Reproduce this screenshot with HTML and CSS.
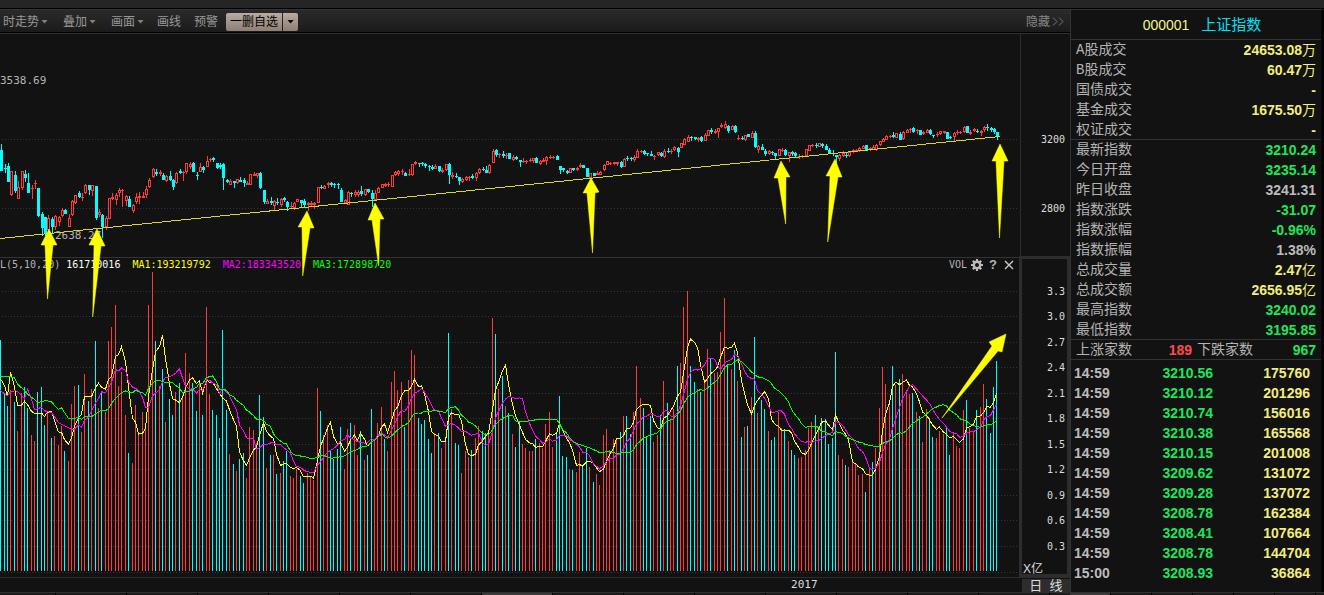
FILE: index.html
```html
<!DOCTYPE html>
<html lang="zh-CN">
<head>
<meta charset="utf-8">
<title>上证指数 000001</title>
<link rel="stylesheet" href="styles.css">
</head>
<body>
<div class="ribbon"></div>
<main class="workspace">
  <section class="chart-side">
    <nav class="toolbar">
      <button class="tool menu">时走势<i class="caret"></i></button>
      <button class="tool menu">叠加<i class="caret"></i></button>
      <button class="tool menu">画面<i class="caret"></i></button>
      <button class="tool">画线</button>
      <button class="tool">预警</button>
      <div class="split">
        <button class="split-main">一删自选</button>
        <button class="split-more" aria-label="更多"><i class="caret dark"></i></button>
      </div>
      <button class="tool hide">隐藏<svg class="chevrons" viewBox="0 0 12 9"><path d="M1 0.5 5 4.5 1 8.5M7 0.5 11 4.5 7 8.5"/></svg></button>
    </nav>
    <div class="chart">
      <svg id="plot" class="plot" viewBox="0 34 1070 543" preserveAspectRatio="none"></svg>
      <div class="legend">
        <span>L(5,10,20)</span><span class="white">161710016</span><span class="ma1">MA1:193219792</span><span class="ma2">MA2:183343520</span><span class="ma3">MA3:172898720</span>
      </div>
      <div class="pane-tools">
        <span>VOL</span>
        <button aria-label="设置"><svg viewBox="0 0 12 12"><circle cx="6" cy="6" r="3.2" fill="none" stroke="#bbb" stroke-width="2.4"/><path d="M6 0v2.6M6 9.4V12M0 6h2.6M9.4 6H12M1.8 1.8l1.8 1.8M8.4 8.4l1.8 1.8M1.8 10.2l1.8-1.8M8.4 3.6l1.8-1.8" stroke="#bbb" stroke-width="2.2"/></svg></button>
        <button aria-label="帮助" class="help">?</button>
        <button aria-label="关闭"><svg viewBox="0 0 12 12"><path d="M2 2l8 8M10 2l-8 8" stroke="#ccc" stroke-width="1.4"/></svg></button>
      </div>
      <svg id="marks" class="marks" viewBox="0 34 1070 543" preserveAspectRatio="none"></svg>
    </div>
    <div class="timeline">
      <span class="year">2017</span>
      <button class="period">日&nbsp; 线</button>
    </div>
  </section>
  <aside class="quote">
    <h1><span class="code">000001</span><span class="name">上证指数</span></h1>
    <table class="facts">
      <tr><th>A股成交</th><td class="y">24653.08<b>万</b></td></tr>
      <tr><th>B股成交</th><td class="y">60.47<b>万</b></td></tr>
      <tr><th>国债成交</th><td class="y">-</td></tr>
      <tr><th>基金成交</th><td class="y">1675.50<b>万</b></td></tr>
      <tr><th>权证成交</th><td class="y">-</td></tr>
    </table>
    <table class="facts">
      <tr><th>最新指数</th><td class="g">3210.24</td></tr>
      <tr><th>今日开盘</th><td class="g">3235.14</td></tr>
      <tr><th>昨日收盘</th><td>3241.31</td></tr>
      <tr><th>指数涨跌</th><td class="g">-31.07</td></tr>
      <tr><th>指数涨幅</th><td class="g">-0.96%</td></tr>
      <tr><th>指数振幅</th><td>1.38%</td></tr>
      <tr><th>总成交量</th><td class="y">2.47<b>亿</b></td></tr>
      <tr><th>总成交额</th><td class="y">2656.95<b>亿</b></td></tr>
      <tr><th>最高指数</th><td class="g">3240.02</td></tr>
      <tr><th>最低指数</th><td class="g">3195.85</td></tr>
    </table>
    <table class="facts breadth">
      <tr><th>上涨家数</th><td class="r">189</td><th>下跌家数</th><td class="g">967</td></tr>
    </table>
    <table class="ticks">
      <tr><td>14:59</td><td class="g">3210.56</td><td class="y">175760</td></tr>
      <tr><td>14:59</td><td class="g">3210.12</td><td class="y">201296</td></tr>
      <tr><td>14:59</td><td class="g">3210.74</td><td class="y">156016</td></tr>
      <tr><td>14:59</td><td class="g">3210.38</td><td class="y">165568</td></tr>
      <tr><td>14:59</td><td class="g">3210.15</td><td class="y">201008</td></tr>
      <tr><td>14:59</td><td class="g">3209.62</td><td class="y">131072</td></tr>
      <tr><td>14:59</td><td class="g">3209.28</td><td class="y">137072</td></tr>
      <tr><td>14:59</td><td class="g">3208.78</td><td class="y">162384</td></tr>
      <tr><td>14:59</td><td class="g">3208.41</td><td class="y">107664</td></tr>
      <tr><td>14:59</td><td class="g">3208.78</td><td class="y">144704</td></tr>
      <tr><td>15:00</td><td class="g">3208.93</td><td class="y">36864</td></tr>
    </table>
  </aside>
</main>
<footer class="tabs"><div class="tabs-left"><i></i></div><div class="tabs-right"><i></i></div></footer>
<script src="chart.js"></script>
</body>
</html>
```

FILE: styles.css
```css
* { box-sizing: border-box; }

body {
  margin: 0;
  min-height: 100vh;
  display: flex;
  flex-direction: column;
  background: #121212;
  color: #b4b4b4;
  font: 12px/16px "Liberation Sans", "Noto Sans CJK SC", sans-serif;
  overflow: hidden;
}

button {
  padding: 0;
  border: 0;
  background: none;
  color: inherit;
  font: inherit;
}

.ribbon {
  height: 9px;
  background: #252525;
  border-bottom: 1px solid #000;
}

.workspace {
  flex: 1;
  display: grid;
  grid-template-columns: minmax(0, 1fr) 254px;
}

.chart-side { display: flex; flex-direction: column; }

.toolbar {
  height: 25px;
  display: flex;
  align-items: center;
  gap: 13px;
  padding: 0 6px 0 3px;
  border-top: 1px solid #333;
  border-bottom: 1px solid #303030;
  box-shadow: inset 0 -1px #000;
  background: linear-gradient(#2a2a2a, #1a1a1a);
}

.tool {
  display: flex;
  align-items: center;
  color: #999;
  white-space: nowrap;
}

.menu + .menu { margin-left: 2px; }

.caret {
  width: 7px;
  height: 4px;
  margin-left: 2px;
  background: #808080;
  clip-path: polygon(0 0, 100% 0, 50% 100%);
}

.caret.dark { margin: 0; background: #000; }

.split { display: flex; gap: 1px; height: 18px; margin-left: -5px; }

.split-main,
.split-more {
  display: flex;
  align-items: center;
  justify-content: center;
  color: #000;
  background: linear-gradient(#b9aca3, #8f7d73);
}

.split-main { width: 56px; border-radius: 2px 0 0 2px; }
.split-more { width: 15px; border-radius: 0 2px 2px 0; }

.hide { margin-left: auto; gap: 2px; color: #888; }

.chevrons {
  width: 12px;
  height: 9px;
  fill: none;
  stroke: #777;
}

.chart { position: relative; flex: 1; }

.plot,
.marks { display: block; width: 100%; height: 543px; }

.marks { position: absolute; inset: 0; pointer-events: none; }

.legend,
.pane-tools {
  position: absolute;
  top: 223px;
  display: flex;
  font: 10px/15px "DejaVu Sans Mono", monospace;
}

.legend { left: 0; gap: 12px; }
.legend span:first-child { margin-right: -6px; }
.white { color: #fff; }
.ma1 { color: #ff0; }
.ma2 { color: #f0f; }
.ma3 { color: #0f0; }

.pane-tools {
  right: 55px;
  align-items: center;
  gap: 4px;
}

.pane-tools button { width: 12px; height: 12px; display: grid; place-items: center; }
.pane-tools svg { width: 12px; height: 12px; }
.pane-tools .help { font: bold 13px/12px "Liberation Sans", sans-serif; }

.axis-text { font: 10px "DejaVu Sans Mono", monospace; fill: #ddd; text-anchor: end; }
.axis-unit { font-size: 12px; fill: #ddd; }
.price-note { font: 11px "DejaVu Sans Mono", monospace; fill: #b4b4b4; }

.timeline {
  height: 15px;
  display: grid;
  grid-template-columns: 4fr 1fr 48px;
  align-items: center;
  border-top: 1px solid #2d2d2d;
  color: #ddd;
}

.year {
  grid-column: 1;
  justify-self: end;
  font: 11px/14px "DejaVu Sans Mono", monospace;
}

.period {
  grid-column: 3;
  height: 13px;
  background: #2d2d2d;
  font-size: 13px;
  line-height: 13px;
}

.quote {
  border-left: 1px solid #333;
  border-right: 3px solid #060606;
  border-top: 1px solid #333;
}

.quote h1 {
  display: flex;
  align-items: center;
  justify-content: center;
  gap: 12px;
  height: 29px;
  margin: 0 0 1px;
  padding-left: 12px;
  font-size: 14px;
  font-weight: normal;
}

.code { color: #f5f58c; }
.name { color: #00e1f5; font-size: 15px; }

table { width: 100%; border-collapse: collapse; table-layout: fixed; }

tr { height: 20px; }

th {
  width: 72px;
  padding: 0 0 0 5px;
  text-align: left;
  white-space: nowrap;
  color: #b4b4b4;
  font: 14px/20px "Liberation Mono", "Noto Sans CJK SC", monospace;
}

td {
  padding: 0 5px 0 0;
  text-align: right;
  color: #bcbcbc;
  font: bold 14px/20px "Liberation Sans", "Noto Sans CJK SC", sans-serif;
}

td b { font-weight: normal; }

.facts { box-shadow: 0 -1px #333; }
.breadth th { width: 60px; }
.breadth th + td + th { width: 58px; padding: 0; }

.ticks { box-shadow: 0 -1px #333; border-top: 3px solid #121212; }
.ticks td:first-child { width: 62px; padding: 0 0 0 3px; text-align: left; }
.ticks td:nth-child(2) { width: 80px; padding: 0; }
.ticks td:last-child { padding-right: 11px; }

.y { color: #f2ee78; }
.g { color: #1ee65a; }
.r { color: #ff4b4b; }

.tabs {
  height: 3px;
  display: grid;
  grid-template-columns: minmax(0, 1fr) 254px;
  border-top: 1px solid #303030;
}

.tabs-left { padding-left: 482px; background: repeating-linear-gradient(90deg, #1c1c1c 0 55px, #000 55px 56px, #1c1c1c 56px 71px); }
.tabs-right { background: repeating-linear-gradient(90deg, #1c1c1c 0 40px, #000 40px 41px); }

.tabs i { display: block; height: 2px; width: 70px; background: #3a3a3a; }
.tabs-right i { width: 40px; }
```

FILE: chart.js
```js
const NS = "http://www.w3.org/2000/svg";
const plot = document.getElementById("plot");
const marks = document.getElementById("marks");
const UP = "#ff3b3b", DOWN = "#00ffff", BG = "#121212", GRID = "#2d2d2d";

function add(parent, tag, attrs, text) {
  const el = document.createElementNS(NS, tag);
  for (const k in attrs) el.setAttribute(k, attrs[k]);
  if (text) el.textContent = text;
  parent.appendChild(el);
  return el;
}
const rect = (x, y, w, h, fill) =>
  add(plot, "rect", { x, y, width: w, height: h, fill, "shape-rendering": "crispEdges" });
const slotX = i => Math.floor(0.85 + 3.365 * i);

// Volume: direction and distance of the bar top below the pane's origin, in thirds of a unit.
const volumes = `c210 c370 c408 r360 c396 r483 r370 c351 c414 r495 r513 c366 c351 c465 r430 c504 r498 r525 r468 c543
r573 r402 r348 c345 r486 r312 c393 r357 c213 r414 c370 r426 r213 r171 r105 r348 r306 r435 c549 r579
r405 r486 r426 r470 r105 r6 c213 r348 c297 r456 c387 c435 r366 c339 r375 r249 r309 c339 c423 r336
c435 r111 r372 c420 c435 c504 c180 c420 r552 c582 r603 c567 c549 r624 r471 r480 r520 c375 c441 r594
c555 r555 c612 r609 c573 c543 r618 r624 r597 c618 c639 r609 r621 r630 r354 c423 r495 r465 c540 c567
c537 c471 r597 r477 c459 r465 r555 c483 r570 c555 c417 r510 r459 r411 c507 r543 r336 r303 r360 r336
c471 r330 r240 r255 c444 c462 c450 c507 c549 r490 c489 r534 r504 c189 r417 c519 c525 r609 r543 r561
c540 r504 r468 c483 c489 r492 r144 c192 r357 c318 r408 c429 r492 c531 c455 r522 r534 r543 r543 c507
r519 r534 r462 r426 r531 c490 c378 c558 c561 r597 c600 r606 r546 c585 c534 r591 c636 r612 r645 r495
r477 r540 r507 r507 c486 r438 c438 c492 r426 r288 r384 c414 c498 c438 r516 r495 c435 r333 c399 r447
r417 c288 r279 r111 r63 c288 c336 r357 c366 r327 r237 c264 r309 r306 r186 r84 c282 r297 c240 r333
c501 r471 c468 r381 c201 r429 c390 c417 r483 c510 c501 r426 r475 c480 r513 c540 c555 r564 r561 r540
r474 r456 c435 r471 c444 c447 c522 c504 c246 r555 r567 c585 r591 r573 r582 r615 r612 c666 r597 c576
r534 r414 r291 r342 r410 c288 r345 c327 r312 r366 r372 c369 r426 c438 r516 r417 c444 c501 r504 r483
r492 c474 c555 r489 r528 r534 r420 c390 r474 r486 c420 r411 r342 c387 c489 c351 c273`
  .split(/\s+/).map(s => ({ dir: s[0], y: +s.slice(1) }));

// Candles: direction, high, body top, body bottom, low (thirds of a unit), in two bands.
const bandA = `c42 60 122 122|c102 114 118 128|c98 108 155 155|r122 124 194 197|c122 136 182 190|r154 172 208 208|r122 124 173 180|c120 131 143 155|c128 158 190 190|r164 173 176 206
r150 159 163 176|c174 174 258 260|c246 252 295 318|c260 262 312 318|r254 264 300 310|c262 266 290 310|r254 258 290 300|r258 261 275 288|r234 240 257 262|c237 240 251 251
r252 264 292 292|r210 212 255 258|r195 195 219 222|c183 189 202 204|r190 201 203 213|r162 166 188 191|c164 166 180 196|r164 166 182 198|c168 168 264 270|r237 246 254 262
c252 255 290 325|r258 264 290 300|r204 205 266 266|r189 202 207 209|r188 194 209 226|r174 180 188 202|r176 181 184 230|r195 197 213 228|c198 207 230 230|r222 225 242 248
r190 202 216 222|r186 198 203 222|r186 198 203 205|r168 178 194 203|r145 150 172 175|r114 117 140 145|c116 125 131 137|r120 125 133 137|c129 136 150 150|r136 139 153 157
c123 137 149 154|c148 150 170 180|r126 129 160 163|c117 122 128 131|r122 125 129 153|r98 100 126 132|r96 102 110 117|c96 100 125 126|c126 135 138 150|r100 112 126 126
c108 111 120 129|r78 94 110 110|r84 86 89 96|c80 84 89 96|c99 99 114 118|c98 104 110 118|c98 102 144 180|c147 150 157 160|r148 154 165 165|c153 153 158 173
r146 148 158 163|c141 150 155 157|c144 150 160 172|r153 158 164 166|r131 133 165 165|r127 132 139 139|r128 130 138 145|c126 129 174 178|c180 180 216 222|r206 212 221 223
c201 214 220 225|r210 214 228 240|c204 217 220 225|r205 206 224 232|c201 204 210 216|c214 216 230 242|r216 228 232 234|r216 220 235 240|r207 208 217 217|c210 210 218 230
c207 213 226 232|r216 220 226 244|r213 219 225 228|r215 220 224 236|r171 171 220 220|c166 170 174 178|r165 167 176 178|r156 160 166 174|c156 159 164 170|c158 161 165 175
c159 162 165 178|c174 180 215 215|r206 210 218 220|r184 186 224 226|c185 188 193 200|r180 186 194 200|r180 186 194 202|c168 183 192 198|r177 178 195 197|c178 178 185 190
c180 190 206 230|r180 188 210 210|r170 174 188 190|r162 163 173 174|r158 162 167 172|r155 162 165 170|r135 135 170 170|r123 125 134 137|r120 122 131 137|r117 122 126 135
c125 130 137 137|r117 132 135 137|r101 103 135 137|r93 97 103 104|c98 99 102 112|c95 99 103 108|c98 102 108 114|c106 109 112 122|c104 111 117 119|r102 108 116 118
c108 109 122 125|r114 121 126 128|r102 103 120 122|c98 102 134 162|r126 134 140 147|c128 137 141 145|c140 142 154 164|r143 146 156 160|r138 140 149 152|r137 140 144 152
c132 138 143 147|r126 129 143 152|r114 116 128 132|c110 116 120 124|c107 119 128 128|r102 104 130 131|r58 64 100 100|c57 61 74 80|r68 72 75 83|c63 73 78 84
r69 74 78 86|c69 70 86 88`;
const bandB = `r136 141 149 152|c138 141 146 150|c150 150 156 171|r144 152 155 160|r150 153 156 162|r144 150 153 156|r144 145 152 160|c141 144 158 158
r150 154 162 165|r144 150 155 157|r138 142 153 165|r135 140 143 148|r138 140 144 147|c135 138 150 150|c168 168 180 192|c174 174 179 186|c180 183 189 192|r174 175 188 189
c174 174 180 183|r171 174 179 182|r159 165 171 174|c165 165 174 174|c174 174 200 201|r189 190 204 204|c189 190 197 197|r183 189 194 195|r184 187 194 195|r162 164 180 183
r153 153 164 165|r156 160 163 165|r156 157 161 165|r156 156 162 168|c153 156 170 174|r144 146 170 171|c138 144 148 153|c141 145 148 153|r135 142 150 156|r117 123 144 144
r120 122 126 129|c120 122 132 135|c129 130 133 138|c123 132 138 138|r135 138 141 150|r126 127 136 138|c126 130 137 141|r117 124 142 144|c114 122 126 129|r117 122 126 132
r108 112 121 123|c111 114 126 141|r99 100 114 114|r84 88 105 106|r76 82 95 96|c78 81 85 92|c81 81 86 90|r81 83 90 96|c78 81 93 96|r69 76 92 93
r60 61 77 78|c54 60 66 72|r57 64 68 72|r54 55 67 84|r39 46 50 54|r33 43 54 57|c45 48 63 69|r45 48 59 60|c45 48 66 69|r75 84 87 90
c78 84 87 90|r75 76 90 93|c72 72 81 81|r63 69 83 84|c63 69 111 114|r105 109 119 129|c102 111 120 120|c117 123 132 138|r120 124 132 134|c123 126 129 135
c129 129 138 147|r117 118 138 138|r114 119 123 126|c117 120 135 138|r126 127 139 156|c123 127 132 138|c126 129 138 141|r132 138 142 147|r135 138 141 144|r117 118 138 138
r105 106 122 123|r102 104 107 111|c99 105 108 114|r99 100 112 112|c99 102 107 114|c102 108 119 120|c114 120 129 132|c120 129 132 138|c135 135 140 158|r132 136 147 153
r123 129 138 141|c126 135 139 144|r123 125 138 141|r117 120 124 128|r117 120 123 126|r111 113 123 126|r105 107 118 118|c105 106 119 120|r111 115 118 123|r105 112 119 120
r101 105 119 122|r93 94 106 107|r84 88 95 96|r75 77 89 91|r75 78 81 84|c66 75 80 84|r69 70 83 84|c66 72 90 90|r63 66 88 90|r57 60 68 70
r54 56 60 68|c51 55 66 69|r58 60 63 72|c60 60 75 75|r63 65 73 75|r57 60 69 70|c57 60 72 75|c75 75 78 84|r66 71 76 81|r63 64 71 75
r63 64 68 72|c66 66 86 87|c78 80 83 86|r66 70 82 95|r60 66 69 75|r62 66 69 72|r48 51 66 68|c48 48 69 69|r60 66 72 75|r54 57 64 66
c57 63 66 69|r60 63 68 78|r48 51 60 66|c42 51 54 62|c51 54 60 66|c54 58 66 72|c66 66 81 90`;

const parse = (s, base) => s.split(/[|\n]/).map(c =>
  [c[0], ...c.slice(1).split(" ").map(v => base + Math.round(v / 3))]);
const candles = [...parse(bandA, 130), ...parse(bandB, 110)];

// Grid and pane frames
const ticks = [291, 316, 342, 367, 393, 418, 444, 469, 495, 520, 546, 572];
[139, 208, ...ticks].forEach(y =>
  add(plot, "line", { x1: 2, x2: 1019, y1: y + 0.5, y2: y + 0.5, stroke: "#353535", "stroke-dasharray": "1 2", "shape-rendering": "crispEdges" }));
rect(0, 257, 1020, 1, "#333");
rect(1020, 34, 1, 223, GRID);
add(plot, "rect", { x: 1020.5, y: 257.5, width: 48, height: 318, fill: "none", stroke: GRID, "stroke-width": 3 });

// Axis labels
add(plot, "text", { x: 1065, y: 143, class: "axis-text" }, "3200");
add(plot, "text", { x: 1065, y: 212, class: "axis-text" }, "2800");
ticks.slice(0, 11).forEach((y, i) =>
  add(plot, "text", { x: 1065, y: y + 4, class: "axis-text" }, (3.3 - i * 0.3).toFixed(1)));
add(plot, "text", { x: 1023, y: 573, class: "axis-unit" }, "X亿");
add(plot, "text", { x: 0, y: 84, class: "price-note" }, "3538.69");
add(plot, "text", { x: 55, y: 239, class: "price-note" }, "2638.27");

// Candles
candles.forEach(([dir, hi, top, bot, lo], i) => {
  const x = slotX(i), color = dir === "r" ? UP : DOWN, h = Math.max(1, bot - top);
  rect(x + 1, hi, 1, Math.max(1, lo - hi), color);
  rect(x, top, 3, h, color);
  if (dir === "r" && h > 2) rect(x + 1, top + 1, 1, h - 2, BG);
});
add(plot, "line", { x1: 0, y1: 238.5, x2: 1000, y2: 136.5, stroke: "#d8d820", "shape-rendering": "crispEdges" });

// Volume bars
volumes.forEach((v, i) => {
  const top = 270 + v.y / 3;
  rect(slotX(i), top, 1, 571 - top, v.dir === "r" ? UP : DOWN);
});

// Moving averages; the seeds cover the slots whose window starts before the data.
function average(n, seed, color) {
  const pts = volumes.map((v, i) => {
    let y = seed[i];
    if (i >= seed.length) y = volumes.slice(i - n + 1, i + 1).reduce((a, b) => a + b.y, 0) / n;
    return `${slotX(i) + 0.5},${(270.5 + y / 3).toFixed(1)}`;
  });
  add(plot, "polyline", { points: pts.join(" "), fill: "none", stroke: color, "stroke-width": 1, "shape-rendering": "crispEdges" });
}
average(5, [325, 345, 377, 305], "#ffff00");
average(10, [360, 370, 376, 364, 361, 362, 375, 385, 356], "#ff00ff");
average(20, [319, 319, 319, 319, 322, 340, 352, 361, 371, 380, 387, 396, 394, 391, 391, 394, 405, 416, 412], "#00ff00");

// Arrow annotations: tip, head corner, shaft corner, tail, shaft corner, head corner
["49,229 41,245 45,245 47.5,299 53,245 57,245",
 "97,229 89,245 94,245 92.7,317 101,246 105,246",
 "307,211 298,227 302,227 302.7,276 310,228 314,228",
 "375,203 368,220 372,220 378.7,266 380,219 384,219",
 "591,178 583,193 587,193 592.5,253 595,193 599,192",
 "781,161 774,178 778,178 785.7,224 786,177 790,177",
 "835,159 826,176 830,176 827.7,242 838,177 842,177",
 "1000,144 992,161 996,161 999.5,238 1004,161 1008,161",
 "1006,334 989,342 992,346 942,418 998,351 1002,352"
].forEach(points => add(marks, "polygon", { points, fill: "#ffff00", stroke: "#ffff00", "stroke-width": 0.5 }));
```
